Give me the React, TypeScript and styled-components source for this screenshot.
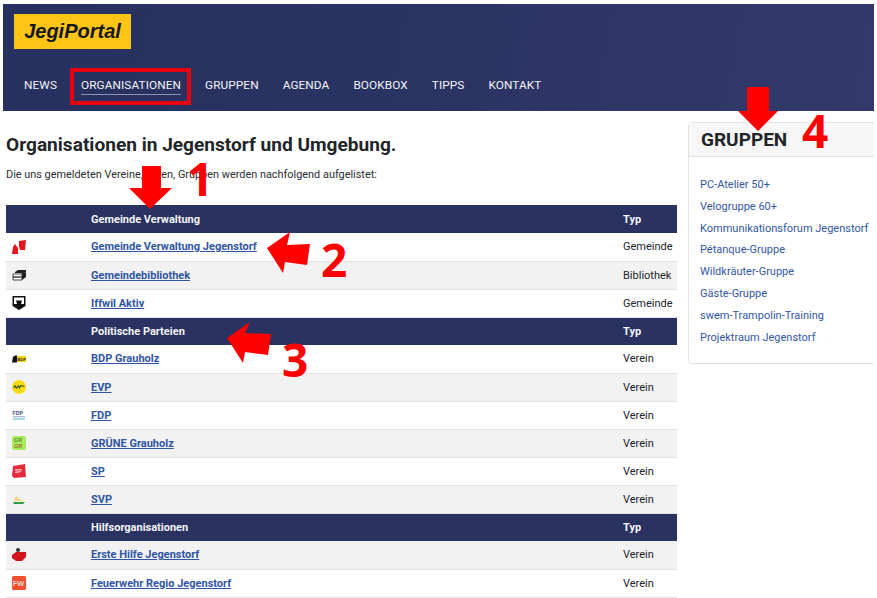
import React from "react";
import styled, { createGlobalStyle } from "styled-components";

const GlobalStyle = createGlobalStyle`
  html, body {
    margin: 0;
    height: 598px;
    overflow: hidden;
    background: #fff;
  }
  body {
    font-family: Roboto, "Liberation Sans", sans-serif;
    color: #212529;
  }
`;

const Page = styled.div`
  position: relative;
  width: 871px;
  height: 594px;
  margin: 4px 0 0 3px;
  overflow: hidden;
`;

const Header = styled.header`
  height: 107px;
  background: linear-gradient(100deg, #27315f 0%, #2a3463 50%, #333a6b 100%);
  box-sizing: border-box;
  padding: 10px 0 0 11px;
`;

const Logo = styled.div`
  width: 117px;
  height: 35px;
  background: #fec516;
  color: #16171c;
  font: italic bold 20px/35px "Liberation Sans", Arial, sans-serif;
  text-align: center;
`;

const Nav = styled.nav`
  display: flex;
  gap: 24px;
  margin: 28px 0 0 10px;
`;

const NavItem = styled.a<{ $active?: boolean }>`
  color: #f2f3f7;
  font-size: 11.8px;
  line-height: 16px;
  padding-bottom: 1px;
  letter-spacing: 0.1px;
  border-bottom: 1px solid ${(p) => (p.$active ? "#8d93b3" : "transparent")};
`;

const Content = styled.div`
  display: flex;
  align-items: flex-start;
  padding: 11px 0 0 3px;
`;

const Main = styled.main`
  width: 671px;
  flex: none;
`;

const Title = styled.h1`
  margin: 10px 0 0;
  font-size: 19.1px;
  line-height: 26px;
  font-weight: 700;
  color: #212529;
`;

const Intro = styled.p`
  margin: 8px 0 0;
  font-size: 10.9px;
  line-height: 18px;
  color: #2b2e33;
`;

const Table = styled.table`
  width: 671px;
  margin-top: 21px;
  border-collapse: collapse;
  table-layout: fixed;
  font-size: 11px;
`;

const HeadRow = styled.tr`
  height: 28px;
  background: #293260;
  color: #f3f4f8;
  font-weight: 700;
`;

const Row = styled.tr`
  height: 28px;
  background: #fff;
  border-bottom: 1px solid #dee2e6;

  &:nth-child(odd) {
    background: #f2f2f2;
  }
`;

const Cell = styled.td`
  padding: 0;
  vertical-align: middle;
`;

const IconCell = styled(Cell)`
  padding-left: 6px;
  line-height: 0;
`;

const TypeCell = styled(Cell)`
  color: #22252a;
`;

const OrgLink = styled.a`
  color: #2f55a4;
  font-weight: 700;
  text-decoration: underline;
`;

const Sidebar = styled.aside`
  flex: none;
  width: 200px;
  height: 242px;
  margin: 0 0 0 11px;
  box-sizing: border-box;
  border: 1px solid #e3e3e3;
  border-radius: 4px;
`;

const SideTitle = styled.div`
  height: 34px;
  box-sizing: border-box;
  padding-left: 12px;
  background: #f7f7f7;
  border-bottom: 1px solid #e3e3e3;
  font-size: 19px;
  line-height: 34px;
  font-weight: 700;
  color: #212529;
`;

const SideList = styled.div`
  display: flex;
  flex-direction: column;
  padding: 17px 0 0 11px;
`;

const SideLink = styled.a`
  font-size: 11px;
  line-height: 21.8px;
  color: #3357a5;
  white-space: nowrap;
`;

const HighlightBox = styled.div`
  position: absolute;
  left: 67px;
  top: 64px;
  width: 121px;
  height: 37px;
  box-sizing: border-box;
  border: 4px solid #e8000f;
`;

const Mark = styled.div<{ $x: number; $y: number; $size: number }>`
  position: absolute;
  left: ${(p) => p.$x}px;
  top: ${(p) => p.$y}px;
  color: #fe0000;
  font-family: "Open Sans", "Liberation Sans", sans-serif;
  font-weight: 700;
  font-size: ${(p) => p.$size}px;
  line-height: 1;
`;

const Overlay = styled.svg`
  position: absolute;
  left: 0;
  top: 0;
  width: 871px;
  height: 594px;
  pointer-events: none;
`;

const Arrows = () => (
  <Overlay viewBox="0 0 871 594">
    <g fill="#fe0000">
      <polygon points="139,162 158,162 158,184 169,184 147,205 126,184 139,184" />
      <polygon points="264,244 287,228 284,241 307,240 304,261 282,258 280,269" />
      <polygon points="224,334 247,318 242,329 268,330 265,351 242,348 240,359" />
      <polygon points="744,83 766,83 766,107 775,107 755,127 735,107 744,107" />
    </g>
  </Overlay>
);

const Svg = styled.svg`
  width: 14px;
  height: 14px;
  display: inline-block;
`;

const IconLabel = styled.text`
  font-family: "Liberation Sans", sans-serif;
  font-weight: 700;
`;

const IconGemeinde = () => (
  <Svg viewBox="0 0 14 14">
    <polygon fill="#e8141c" points="0,14 1,7 3,4 6,8 6,14" />
    <polygon fill="#e8141c" points="7,1 14,0 13,10 8,10 7,6" />
  </Svg>
);
const IconBook = () => (
  <Svg viewBox="0 0 14 14">
    <path d="M3 4 L6 2 H14 V4 L11 5 H3 Z" fill="#1f1f1f" />
    <path d="M1 6 H10 V9 H1 Z M1 9 H10 V12 H1 Z" stroke="#333" strokeWidth="0.9" fill="#fff" />
    <path d="M10 5 L14 4 V9 L10 12 Z" fill="#1f1f1f" />
  </Svg>
);
const IconIffwil = () => (
  <Svg viewBox="0 0 14 14">
    <path d="M0.5 0 H13.5 V10 L7 14 L0.5 10 Z" fill="#111" />
    <path d="M2 1.5 H12 V8 L9 8 L10 4.5 L4 4.5 L5 8 L2 8 Z" fill="#fff" />
  </Svg>
);
const IconBdp = () => (
  <Svg viewBox="0 0 14 14">
    <rect x="4" y="4" width="10" height="6" fill="#f6d50c" />
    <path d="M0 10.5 L1 5 L3 3.5 H5 V10.5 Z" fill="#111" />
    <IconLabel x="5.2" y="8.6" fontSize="4.2" fill="#333">BDP</IconLabel>
  </Svg>
);
const IconEvp = () => (
  <Svg viewBox="0 0 14 14">
    <circle cx="7" cy="7" r="7" fill="#fbdc12" />
    <path d="M1.5 8 L3 5.8 L4.5 8 L6.5 5.8 L7.5 8 L9 5.5 L12.5 6.5" stroke="#3a5a22" strokeWidth="1.2" fill="none" />
  </Svg>
);
const IconFdp = () => (
  <Svg viewBox="0 0 14 14">
    <IconLabel x="0.5" y="6.5" fontSize="5.2" fill="#3d4f8e">FDP</IconLabel>
    <path d="M1 8.8 H13" stroke="#8da0c8" strokeWidth="1" />
    <path d="M1 11 H13" stroke="#55b5d8" strokeWidth="1" />
  </Svg>
);
const IconGruene = () => (
  <Svg viewBox="0 0 14 14">
    <rect width="14" height="14" rx="2" fill="#a6ed5c" />
    <IconLabel x="2" y="6.2" fontSize="5.4" fill="#5f8f34">GR</IconLabel>
    <IconLabel x="2" y="12" fontSize="5.4" fill="#9b6a2e">GR</IconLabel>
  </Svg>
);
const IconSp = () => (
  <Svg viewBox="0 0 14 14">
    <path d="M1 2 L13 0 L14 13 L2 14 L0 12 Z" fill="#e62b3d" />
    <IconLabel x="3" y="9" fontSize="5" fill="#fbd7da">SP</IconLabel>
  </Svg>
);
const IconSvp = () => (
  <Svg viewBox="0 0 14 14">
    <path d="M1 10 H13 L11 12 H2 Z" fill="#2f9b48" />
    <path d="M2 9 L4 4 L9 8 L13 9 Z" fill="#e8dc80" />
  </Svg>
);
const IconErste = () => (
  <Svg viewBox="0 0 14 14">
    <path d="M0 7 L4 4 H14 V9 L10 13 H4 L0 10 Z" fill="#d3141c" />
    <circle cx="6" cy="2" r="2" fill="#333" />
  </Svg>
);
const IconFw = () => (
  <Svg viewBox="0 0 14 14">
    <rect width="14" height="14" rx="1.5" fill="#f0502c" />
    <IconLabel x="0.8" y="10" fontSize="7.4" fill="#fbd9cf">FW</IconLabel>
  </Svg>
);

const groups = [
  {
    name: "Gemeinde Verwaltung",
    rows: [
      { icon: <IconGemeinde />, name: "Gemeinde Verwaltung Jegenstorf", type: "Gemeinde" },
      { icon: <IconBook />, name: "Gemeindebibliothek", type: "Bibliothek" },
      { icon: <IconIffwil />, name: "Iffwil Aktiv", type: "Gemeinde" },
    ],
  },
  {
    name: "Politische Parteien",
    rows: [
      { icon: <IconBdp />, name: "BDP Grauholz", type: "Verein" },
      { icon: <IconEvp />, name: "EVP", type: "Verein" },
      { icon: <IconFdp />, name: "FDP", type: "Verein" },
      { icon: <IconGruene />, name: "GRÜNE Grauholz", type: "Verein" },
      { icon: <IconSp />, name: "SP", type: "Verein" },
      { icon: <IconSvp />, name: "SVP", type: "Verein" },
    ],
  },
  {
    name: "Hilfsorganisationen",
    rows: [
      { icon: <IconErste />, name: "Erste Hilfe Jegenstorf", type: "Verein" },
      { icon: <IconFw />, name: "Feuerwehr Regio Jegenstorf", type: "Verein" },
    ],
  },
];

const navItems = ["NEWS", "ORGANISATIONEN", "GRUPPEN", "AGENDA", "BOOKBOX", "TIPPS", "KONTAKT"];

const sideLinks = [
  "PC-Atelier 50+",
  "Velogruppe 60+",
  "Kommunikationsforum Jegenstorf",
  "Pétanque-Gruppe",
  "Wildkräuter-Gruppe",
  "Gäste-Gruppe",
  "swem-Trampolin-Training",
  "Projektraum Jegenstorf",
];

const App = () => {
  return (
    <>
      <GlobalStyle />
      <Page>
        <Header>
          <Logo>JegiPortal</Logo>
          <Nav>
            {navItems.map((item) => (
              <NavItem key={item} $active={item === "ORGANISATIONEN"}>{item}</NavItem>
            ))}
          </Nav>
        </Header>
        <Content>
          <Main>
            <Title>Organisationen in Jegenstorf und Umgebung.</Title>
            <Intro>Die uns gemeldeten Vereine, Foren, Gruppen werden nachfolgend aufgelistet:</Intro>
            <Table>
              <colgroup>
                <col style={{ width: 85 }} />
                <col />
                <col style={{ width: 54 }} />
              </colgroup>
              <tbody>
                {groups.map((group) => (
                  <React.Fragment key={group.name}>
                    <HeadRow>
                      <Cell />
                      <Cell>{group.name}</Cell>
                      <Cell>Typ</Cell>
                    </HeadRow>
                    {group.rows.map((row) => (
                      <Row key={row.name}>
                        <IconCell>{row.icon}</IconCell>
                        <Cell><OrgLink>{row.name}</OrgLink></Cell>
                        <TypeCell>{row.type}</TypeCell>
                      </Row>
                    ))}
                  </React.Fragment>
                ))}
              </tbody>
            </Table>
          </Main>
          <Sidebar>
            <SideTitle>GRUPPEN</SideTitle>
            <SideList>
              {sideLinks.map((link) => (
                <SideLink key={link}>{link}</SideLink>
              ))}
            </SideList>
          </Sidebar>
        </Content>
        <HighlightBox />
        <Arrows />
        <Mark $x={184} $y={151} $size={46}>1</Mark>
        <Mark $x={318} $y={232} $size={46}>2</Mark>
        <Mark $x={279} $y={332} $size={46}>3</Mark>
        <Mark $x={799} $y={103} $size={46}>4</Mark>
      </Page>
    </>
  );
};

export default App;
